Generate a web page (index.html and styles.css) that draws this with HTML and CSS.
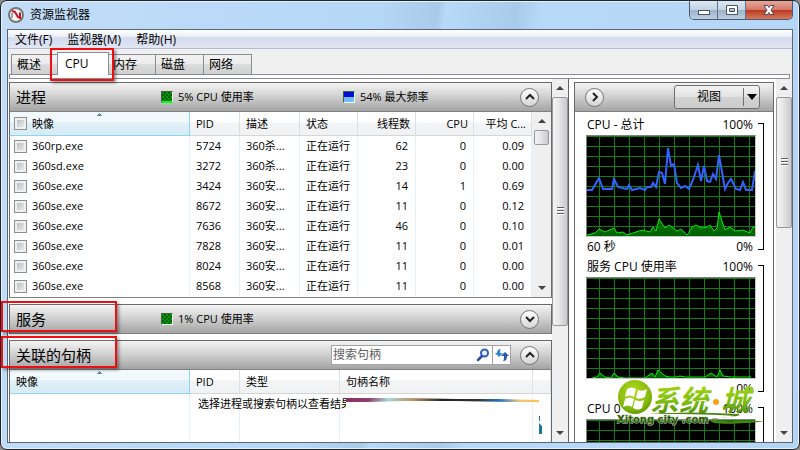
FILE: index.html
```html
<!DOCTYPE html>
<html lang="zh-CN">
  <head>
    <meta charset="UTF-8" />
    <meta name="viewport" content="width=device-width, initial-scale=1.0" />
    <title>资源监视器</title>
    <link rel="stylesheet" href="styles.css">
  </head>
  <body>
    <div class="window">
      <header class="titlebar">
        <svg class="app-icon" viewBox="0 0 16 16" width="16" height="16">
          <circle cx="8" cy="8" r="7" fill="#f4f4f4" stroke="#777" stroke-width="2" />
          <path d="M4 11V6M12 10V5" stroke="#555" stroke-width="1" />
          <path d="M4 4l3 1 3 5 2 1V6" fill="none" stroke="#d0101c" stroke-width="2" />
        </svg>
        <h1>资源监视器</h1>
        <div class="window-buttons">
          <button class="win-btn" aria-label="最小化">
            <svg viewBox="0 0 14 12" width="14" height="12"><rect x="1.500" y="6.500" width="11" height="4" fill="#fff" stroke="#4c5566" /></svg>
          </button>
          <button class="win-btn" aria-label="最大化">
            <svg viewBox="0 0 14 12" width="14" height="12"><path d="M1.500 1.500h11v9h-11zM4.500 4.500v3h5v-3z" fill="#fff" fill-rule="evenodd" stroke="#4c5566" /></svg>
          </button>
          <button class="win-btn close" aria-label="关闭">
            <svg viewBox="0 0 14 12" width="14" height="12"><path d="M2 1.500h3.500L7 3.500l1.500-2H12L9 6l3 4.500H8.500L7 8.500l-1.500 2H2L5 6z" fill="#fff" stroke="#4a4a58" /></svg>
          </button>
        </div>
      </header>

      <div class="client">
        <nav class="menubar">
          <a href="#">文件(F)</a>
          <a href="#">监视器(M)</a>
          <a href="#">帮助(H)</a>
        </nav>

        <div class="tabs">
          <button class="tab">概述</button>
          <button class="tab active">CPU</button>
          <button class="tab">内存</button>
          <button class="tab">磁盘</button>
          <button class="tab">网络</button>
        </div>
        <div class="tab-edge"></div>

        <main class="panes">
          <div class="left-pane">
            <section class="panel">
              <div class="panel-header">
                <h2>进程</h2>
                <span class="stat"><i class="meter green low"></i>5% CPU 使用率</span>
                <span class="stat"><i class="meter blue"></i>54% 最大频率</span>
                <button class="round" aria-label="折叠进程">
                  <svg viewBox="0 0 10 8" width="10" height="8"><path d="M1 6l4-4 4 4" /></svg>
                </button>
              </div>
              <div class="panel-body">
                <table class="processes">
                  <colgroup>
                    <col class="c-image"><col class="c-pid"><col class="c-desc"><col><col><col><col>
                  </colgroup>
                  <thead>
                    <tr>
                      <th class="sorted"><label><input type="checkbox">映像</label></th>
                      <th>PID</th><th>描述</th><th>状态</th>
                      <th class="num">线程数</th><th class="num">CPU</th><th class="num">平均 C...</th>
                    </tr>
                  </thead>
                  <tbody>
                    <tr><td><label><input type="checkbox">360rp.exe</label></td><td>5724</td><td>360杀...</td><td>正在运行</td><td class="num">62</td><td class="num">0</td><td class="num">0.09</td></tr>
                    <tr><td><label><input type="checkbox">360sd.exe</label></td><td>3272</td><td>360杀...</td><td>正在运行</td><td class="num">23</td><td class="num">0</td><td class="num">0.00</td></tr>
                    <tr><td><label><input type="checkbox">360se.exe</label></td><td>3424</td><td>360安...</td><td>正在运行</td><td class="num">14</td><td class="num">1</td><td class="num">0.69</td></tr>
                    <tr><td><label><input type="checkbox">360se.exe</label></td><td>8672</td><td>360安...</td><td>正在运行</td><td class="num">11</td><td class="num">0</td><td class="num">0.12</td></tr>
                    <tr><td><label><input type="checkbox">360se.exe</label></td><td>7636</td><td>360安...</td><td>正在运行</td><td class="num">46</td><td class="num">0</td><td class="num">0.10</td></tr>
                    <tr><td><label><input type="checkbox">360se.exe</label></td><td>7828</td><td>360安...</td><td>正在运行</td><td class="num">11</td><td class="num">0</td><td class="num">0.01</td></tr>
                    <tr><td><label><input type="checkbox">360se.exe</label></td><td>8024</td><td>360安...</td><td>正在运行</td><td class="num">11</td><td class="num">0</td><td class="num">0.00</td></tr>
                    <tr><td><label><input type="checkbox">360se.exe</label></td><td>8568</td><td>360安...</td><td>正在运行</td><td class="num">11</td><td class="num">0</td><td class="num">0.00</td></tr>
                  </tbody>
                </table>
                <div class="scrollbar list-scroll">
                  <span class="arrow up"></span>
                  <span class="thumb"></span>
                  <span class="arrow down"></span>
                </div>
              </div>
            </section>

            <section class="panel">
              <div class="panel-header">
                <h2>服务</h2>
                <span class="stat"><i class="meter green"></i>1% CPU 使用率</span>
                <button class="round" aria-label="展开服务">
                  <svg viewBox="0 0 10 8" width="10" height="8"><path d="M1 2l4 4 4-4" /></svg>
                </button>
              </div>
            </section>

            <section class="panel handles">
              <div class="panel-header">
                <h2>关联的句柄</h2>
                <div class="search">
                  <input type="text" placeholder="搜索句柄" aria-label="搜索句柄">
                  <button aria-label="搜索">
                    <svg viewBox="0 0 14 14" width="14" height="14"><circle cx="8.500" cy="5" r="3.500" fill="#eaf4ff" stroke="#2b62b8" stroke-width="2" /><path d="M6 8l-4 4" stroke="#2b4fa8" stroke-width="2.500" stroke-linecap="round" /></svg>
                  </button>
                  <button class="refresh" aria-label="刷新">
                    <svg viewBox="0 0 16 14" width="16" height="14"><path d="M7 1C4 1 3 3 3 5H1l4 4 4-4H6c0-2 0-3 1-4z" fill="#2f86cf" /><path d="M9 13c3 0 4-2 4-5h2l-4-4-4 4h3c0 2 0 4-1 5z" fill="#2b57ad" /></svg>
                  </button>
                </div>
                <button class="round" aria-label="折叠句柄">
                  <svg viewBox="0 0 10 8" width="10" height="8"><path d="M1 6l4-4 4 4" /></svg>
                </button>
              </div>
              <div class="panel-body">
                <table>
                  <colgroup>
                    <col class="c-image"><col class="c-pid"><col class="c-type"><col><col class="c-rest">
                  </colgroup>
                  <thead>
                    <tr><th class="sorted">映像</th><th>PID</th><th>类型</th><th>句柄名称</th><th></th></tr>
                  </thead>
                  <tbody>
                    <tr><td></td><td class="hint"><span>选择进程或搜索句柄以查看结果</span></td><td></td><td></td><td></td></tr>
                  </tbody>
                </table>
              </div>
              <svg class="streak" viewBox="0 0 198 40" width="198" height="40">
                <defs>
                  <linearGradient id="streak">
                    <stop offset="0" stop-color="#8c2c68" /><stop offset=".12" stop-color="#94406e" />
                    <stop offset=".22" stop-color="#a8d8d8" /><stop offset=".35" stop-color="#b89060" />
                    <stop offset=".5" stop-color="#222" /><stop offset=".68" stop-color="#333" />
                    <stop offset=".8" stop-color="#2878c8" /><stop offset=".9" stop-color="#f0c878" /><stop offset="1" stop-color="#ffc048" />
                  </linearGradient>
                </defs>
                <path d="M0 1h60l50 1h40l43 1v2h-25l-58-1H60l-40 1H0z" fill="url(#streak)" />
                <path d="M193 19h1v5h-1zM193 26l3 3v8h-3z" fill="#1c7898" />
              </svg>
            </section>
          </div>

          <div class="scrollbar main-scroll">
            <span class="arrow up"></span>
            <span class="thumb"><i class="grip"></i></span>
            <span class="arrow down"></span>
          </div>

          <aside class="right-pane">
            <div class="panel charts">
              <div class="panel-header">
                <button class="round" aria-label="隐藏图表">
                  <svg viewBox="0 0 8 10" width="8" height="10"><path d="M2 1l4 4-4 4" /></svg>
                </button>
                <button class="view-btn"><span>视图</span><i class="caret"></i></button>
              </div>

              <div class="chart">
                <div class="chart-label"><span>CPU - 总计</span><span>100%</span></div>
                <svg class="plot" viewBox="0 0 168 100" preserveAspectRatio="none">
                  <defs>
                    <pattern id="grid" x="12" y="0" width="15" height="10" patternUnits="userSpaceOnUse">
                      <path d="M.5 0v10M0 .5h15" stroke="#108010" shape-rendering="crispEdges" />
                    </pattern>
                  </defs>
                  <rect width="168" height="100" fill="url(#grid)" />
                  <polygon points="0,100 0,99 8,97 12,93 18,96 27,92 30,97 36,96 40,99 46,97 55,94 63,96 66,91 69,95 72,83 78,92 82,89 86,92 90,95 94,93 100,99 102,97 105,91 109,89 115,92 120,91 123,89 127,95 130,92 132,76 138,94 143,91 148,95 156,94 163,97 166,91 168,91 168,100" fill="#006400" />
                  <polyline points="0,99 8,97 12,93 18,96 27,92 30,97 36,96 40,99 46,97 55,94 63,96 66,91 69,95 72,83 78,92 82,89 86,92 90,95 94,93 100,99 102,97 105,91 109,89 115,92 120,91 123,89 127,95 130,92 132,76 138,94 143,91 148,95 156,94 163,97 166,91 168,91" fill="none" stroke="#00f000" />
                  <polyline points="0,54 5,54 12,42 16,53 25,53 27,43 31,51 40,53 42,49 45,54 53,52 58,54 60,51 64,51 66,47 69,51 72,36 75,37 78,48 81,12 84,30 87,28 90,47 94,52 98,50 102,53 106,44 111,29 114,45 117,30 120,45 123,46 126,38 129,43 132,19 138,53 141,47 144,43 149,53 153,54 156,46 159,54 165,54 168,35" fill="none" stroke="#3264ff" stroke-width="2" />
                </svg>
                <div class="chart-foot"><span>60 秒</span><span>0%</span></div>
              </div>

              <div class="chart">
                <div class="chart-label"><span>服务 CPU 使用率</span><span>100%</span></div>
                <svg class="plot" viewBox="0 0 168 100" preserveAspectRatio="none">
                  <rect width="168" height="100" fill="url(#grid)" />
                  <path d="M5 100l5-1 3-4 5 4 6 1 3-5 4 4 7 1h8l12 0 7-5 3 4 3-7 7 6 5 1h6l4-1 5 1h20l6-4 6 4 3-7 3 6 8 1h20" fill="#006400" stroke="#00f000" />
                </svg>
                <div class="chart-foot"><span></span><span>0%</span></div>
              </div>

              <div class="chart">
                <div class="chart-label"><span>CPU 0</span><span>100%</span></div>
                <svg class="plot" viewBox="0 0 168 100" preserveAspectRatio="none">
                  <rect width="168" height="100" fill="url(#grid)" />
                </svg>
              </div>
            </div>
            <div class="scrollbar chart-scroll">
              <span class="arrow up"></span>
              <span class="thumb"><i class="grip"></i></span>
              <span class="arrow down"></span>
            </div>
          </aside>
        </main>
      </div>

      <div class="mark mark-tab"></div>
      <div class="mark mark-services"></div>
      <div class="mark mark-handles"></div>

      <div class="watermark">
        <svg viewBox="0 0 150 52" width="150" height="52">
          <defs>
            <radialGradient id="ball" cx=".45" cy=".35" r=".7">
              <stop offset="0" stop-color="#b4dc20" /><stop offset=".7" stop-color="#86b80c" /><stop offset="1" stop-color="#5c9400" />
            </radialGradient>
            <linearGradient id="leaf" x1="0" y1="0" x2="0" y2="1">
              <stop offset="0" stop-color="#b4e010" /><stop offset=".6" stop-color="#7cbc10" /><stop offset="1" stop-color="#3c7c10" />
            </linearGradient>
          </defs>
          <circle cx="19" cy="19" r="17" fill="url(#ball)" />
          <path d="M11 11q5-3 9 0l-2 8q-4-3-9 0zM22 12q4 2 9-1l-2 8q-5 3-9 1zM9 21q4-3 9 0l-2 8q-4-3-9 0zM19 22q5 2 9 0l-2 8q-4 3-9 0z" fill="#fff" />
          <text class="wm-name" x="34" y="33" fill="url(#leaf)">系统</text>
          <circle cx="100" cy="24" r="3" fill="#ffa010" />
          <text class="wm-name" x="105" y="33" fill="url(#leaf)">城</text>
          <path d="M32 36q40-3 90 0c6 1-6 4-22 4-10 1 0 4 20 3l29 0c-20 3-55 4-54 0 0-4 22-3 24-5-30-2-60-2-87-2z" fill="#4c8410" />
          <text class="wm-url" x="1" y="45">Xitong city .com</text>
        </svg>
      </div>
    </div>
  </body>
</html>
```

FILE: styles.css
```css
* {
  box-sizing: border-box;
}

body {
  margin: 0;
  background-color: #8a8a8a;
  color: #000000;
  font-family: "Open Sans", "Noto Sans CJK SC", sans-serif;
  font-size: 11px;
  line-height: 20px;
}

h1,
h2 {
  margin: 0;
  font-weight: normal;
}

a {
  color: inherit;
  text-decoration: none;
}

button,
input {
  margin: 0;
  padding: 0;
  color: inherit;
  font-family: inherit;
  font-size: inherit;
  line-height: inherit;
}

.window {
  position: relative;
  display: flex;
  flex-direction: column;
  height: 100vh;
  padding: 0 6px 6px;
  border: 1px solid #20242c;
  border-radius: 7px;
  background: linear-gradient(100deg, #c3dcf6 0%, #b9d9f9 30%, #b6d8f9 43%, #a9cae9 50%, #b8dafa 51%, #a9cbeb 59%, #b8dafa 62%, #b4d4f4 100%);
  box-shadow: inset 0 0 0 1px #e4f2ff;
  overflow: hidden;
}

/* title bar */
.titlebar {
  display: flex;
  align-items: center;
  gap: 6px;
  height: 28px;
  flex: none;
}

.app-icon {
  margin-left: 1px;
}

.titlebar h1 {
  flex: 1;
  font-size: 12px;
}

.window-buttons {
  display: flex;
  align-self: flex-start;
  height: 19px;
  border: 1px solid #4b5a70;
  border-top: 0;
  border-radius: 0 0 5px 5px;
  overflow: hidden;
}

.win-btn {
  display: flex;
  align-items: center;
  justify-content: center;
  width: 28px;
  border: 0;
  border-right: 1px solid #5f7088;
  background: linear-gradient(#dce8f4, #c4d4e4 48%, #9cb0c6 50%, #bccfe2);
}

.win-btn.close {
  width: 46px;
  border-right: 0;
  background: linear-gradient(#e8a898, #d47868 48%, #b83820 50%, #d8785c);
}

/* client area */
.client {
  display: flex;
  flex: 1;
  flex-direction: column;
  min-height: 0;
  border: 1px solid #5c6670;
  background-color: #f0f0f0;
}

.menubar {
  display: flex;
  flex: none;
  gap: 15px;
  height: 19px;
  padding-left: 7px;
  border-bottom: 1px solid #b4bcd4;
  background: linear-gradient(#ffffff, #e8edf6 38%, #d4dbed 42%, #e0e6f5);
  font-size: 12px;
}

.tabs {
  display: flex;
  flex: none;
  align-items: flex-end;
  height: 25px;
  padding-left: 3px;
}

.tab {
  width: 48px;
  height: 20px;
  padding-left: 5px;
  border: 1px solid #898c95;
  border-bottom: 0;
  background: linear-gradient(#f2f2f2, #ebebeb 48%, #dddddd 50%, #cfcfcf);
  font-size: 12px;
  line-height: 18px;
  text-align: left;
}

.tab + .tab {
  border-left: 0;
}

.tab:first-child {
  border-right: 0;
}

.tab.active {
  z-index: 1;
  width: 52px;
  height: 23px;
  margin: 0 -1px -1px -2px;
  padding-left: 7px;
  border-left: 1px solid #898c95;
  background: #ffffff;
}

.tab-edge {
  flex: none;
  height: 5px;
  margin: 0 2px 0 1px;
  border: 1px solid #898c95;
  background-color: #ffffff;
}

.panes {
  display: flex;
  flex: 1;
  min-height: 0;
  background-color: #ffffff;
}

.left-pane {
  display: flex;
  flex: 1;
  flex-direction: column;
  gap: 6px;
  min-width: 0;
  padding: 3px 0 0 1px;
  overflow: hidden;
}

.panel {
  flex: none;
  border: 1px solid #6a6a6a;
  border-bottom: 0;
}

.panel-header {
  display: grid;
  grid-template-columns: 145px 182px 1fr auto;
  align-items: center;
  height: 29px;
  padding: 0 12px 0 6px;
  border-bottom: 1px solid #808080;
  background: linear-gradient(#f4f4f4, #d2d2d2 45%, #a4a4a4);
}

.panel-header h2 {
  font-size: 15px;
  white-space: nowrap;
}

.stat {
  display: flex;
  align-items: center;
  gap: 5px;
}

.meter {
  width: 12px;
  height: 12px;
  border: 1px solid #e8ffe8;
  border-top-color: #406040;
  border-left-color: #406040;
}

.meter.green {
  background: repeating-conic-gradient(#006400 0 25%, #109010 0 50%) 0 0 / 4px 4px;
}

.meter.low {
  border-bottom: 2px solid #00ff20;
}

.meter.blue {
  background: linear-gradient(#0010d0 50%, #78b8ff 50%);
}

.round {
  display: flex;
  align-items: center;
  justify-content: center;
  grid-column: 4;
  width: 19px;
  height: 19px;
  border: 1px solid #777777;
  border-radius: 50%;
  background: linear-gradient(#ffffff, #d4d4d4);
}

.round path {
  fill: none;
  stroke: #222222;
  stroke-width: 2;
}

.panel-body {
  display: flex;
}

/* lists */
table {
  flex: 1;
  width: 0;
  table-layout: fixed;
  border-collapse: separate;
  border-spacing: 0;
}

.processes {
  margin-bottom: 1px;
}

.left-pane .panel:first-child {
  border-bottom: 1px solid #808080;
}

.c-image {
  width: 180px;
}

.c-pid {
  width: 50px;
}

.c-desc {
  width: 60px;
}

.c-type {
  width: 100px;
}

.c-rest {
  width: 18px;
}

th,
td {
  height: 20px;
  padding: 0 0 0 6px;
  border-right: 1px solid #e6f0f8;
  font-weight: normal;
  text-align: left;
  white-space: nowrap;
}

th {
  height: 24px;
  border-right-color: #dcdfe3;
  border-bottom: 1px solid #d5d5d5;
  background: linear-gradient(#ffffff 45%, #f3f4f6 46%, #f0f2f4);
}

.num {
  padding: 0 7px 0 0;
  text-align: right;
}

th.num {
  padding-right: 5px;
}

.sorted {
  border-color: #8cd4f0;
  background:
    conic-gradient(from 135deg at 50% 0, #5a94b4 90deg, transparent 0) 50% 1px / 7px 3px no-repeat,
    linear-gradient(#f2f9fd 45%, #e0f0f8 46%, #d6ebf5);
}

label {
  display: flex;
  align-items: center;
  gap: 5px;
}

.processes td:first-child,
.processes th:first-child {
  padding-left: 4px;
}

input[type="checkbox"] {
  appearance: none;
  width: 13px;
  height: 13px;
  border: 1px solid #8e8f8f;
  background: linear-gradient(135deg, #aeb3b9, #f6f6f6);
  box-shadow: inset 0 0 0 2px #f0f0f0;
}

.hint span {
  display: block;
  width: 148px;
  margin-left: 2px;
  overflow: hidden;
}

.handles {
  position: relative;
  flex: 1;
}

.handles .panel-header {
  grid-template-columns: 1fr 180px auto;
  gap: 9px;
}

.handles .round {
  grid-column: 3;
}

.handles td {
  height: 60px;
  vertical-align: top;
}

.search {
  display: flex;
  align-items: center;
  height: 20px;
  border: 1px solid #a0a4a8;
  background-color: #ffffff;
}

.search input {
  flex: 1;
  min-width: 0;
  padding-left: 1px;
  border: 0;
  outline: 0;
  background: none;
  font-size: 12px;
}

.search input::placeholder {
  color: #606060;
}

.search button {
  display: flex;
  align-items: center;
  justify-content: center;
  width: 18px;
  height: 18px;
  border: 0;
  background: none;
}

.search .refresh {
  border-left: 1px solid #a0a4a8;
}

.streak {
  position: absolute;
  top: 56px;
  left: 336px;
}

/* scroll bars */
.scrollbar {
  display: flex;
  flex: none;
  flex-direction: column;
  width: 16px;
  background: #efefef;
}

.arrow {
  display: flex;
  align-items: center;
  justify-content: center;
  flex: none;
  height: 18px;
}

.arrow::before {
  content: "";
  border: 4px solid transparent;
}

.arrow.up::before {
  border-top: 0;
  border-bottom-color: #444444;
}

.arrow.down::before {
  border-bottom: 0;
  border-top-color: #444444;
}

.arrow.down {
  margin-top: auto;
}

.thumb {
  display: flex;
  align-items: center;
  justify-content: center;
  border: 1px solid #989898;
  border-radius: 2px;
  background: linear-gradient(90deg, #f4f4f4, #e6e6e8 45%, #c8c8cc);
}

.grip {
  width: 7px;
  height: 8px;
  background: repeating-linear-gradient(#606060 0 1px, #ffffff 1px 2px, transparent 2px 3px);
}

.list-scroll {
  width: 19px;
  padding: 0 2px;
}

.list-scroll .thumb {
  height: 15px;
}

.main-scroll .thumb {
  height: 63%;
}

.chart-scroll .thumb {
  height: 36%;
}

/* charts */
.right-pane {
  display: flex;
  flex: none;
  gap: 2px;
  width: 224px;
  padding-left: 5px;
  border-left: 1px solid #606060;
  overflow: hidden;
}

.charts {
  flex: 1;
  margin-top: 3px;
}

.charts .panel-header {
  display: flex;
  justify-content: space-between;
  padding: 0 13px 0 10px;
}

.view-btn {
  display: flex;
  align-items: center;
  width: 86px;
  height: 24px;
  border: 1px solid #707070;
  border-radius: 3px;
  background: linear-gradient(#f4f4f4, #e2e2e2 48%, #d2d2d2 50%, #cccccc);
  font-size: 12px;
}

.view-btn span {
  flex: 1;
}

.caret {
  display: flex;
  align-items: center;
  justify-content: center;
  width: 16px;
  height: 18px;
  border-left: 1px solid #707070;
}

.caret::before {
  content: "";
  border: 5px solid transparent;
  border-top: 6px solid #000000;
  border-bottom: 0;
}

.chart {
  display: grid;
  grid-template-columns: 1fr 6px;
  grid-template-rows: 20px 102px 20px;
  column-gap: 2px;
  padding: 0 9px 0 11px;
  font-size: 12px;
}

.panel-header + .chart {
  margin-top: 3px;
}

.chart::after {
  content: "";
  grid-column: 2;
  grid-row: 1 / 4;
  margin: 8px 0 7px;
  border: 1px solid #000000;
  border-left: 0;
}

.chart-label,
.chart-foot {
  display: flex;
  grid-column: 1;
  justify-content: space-between;
  padding: 0 3px 0 1px;
}

.plot {
  grid-column: 1;
  width: 100%;
  height: 102px;
  border: 1px solid #c8c8c8;
  border-top-color: #808080;
  border-left-color: #808080;
  background-color: #000000;
}

/* highlight frames lying over the window */
.mark {
  position: absolute;
  border: 2px solid #ee1010;
  box-shadow: 2px 2px 3px rgba(0, 0, 0, 0.4);
  pointer-events: none;
  z-index: 2;
}

.mark-tab {
  top: 47px;
  left: 49px;
  width: 64px;
  height: 33px;
}

.mark-services {
  top: 300px;
  left: 0;
  width: 116px;
  height: 31px;
}

.mark-handles {
  top: 335px;
  left: 0;
  width: 116px;
  height: 32px;
}

.watermark {
  position: absolute;
  right: 33px;
  bottom: 19px;
  height: 52px;
}

.wm-name {
  font-family: "Noto Sans CJK SC", sans-serif;
  font-size: 29px;
  font-style: italic;
  font-weight: bold;
}

.wm-url {
  fill: #2c5c0c;
  stroke: #c8dcb0;
  stroke-width: 1px;
  paint-order: stroke;
  font-family: "DejaVu Sans", sans-serif;
  font-size: 10px;
  font-weight: bold;
}
```
